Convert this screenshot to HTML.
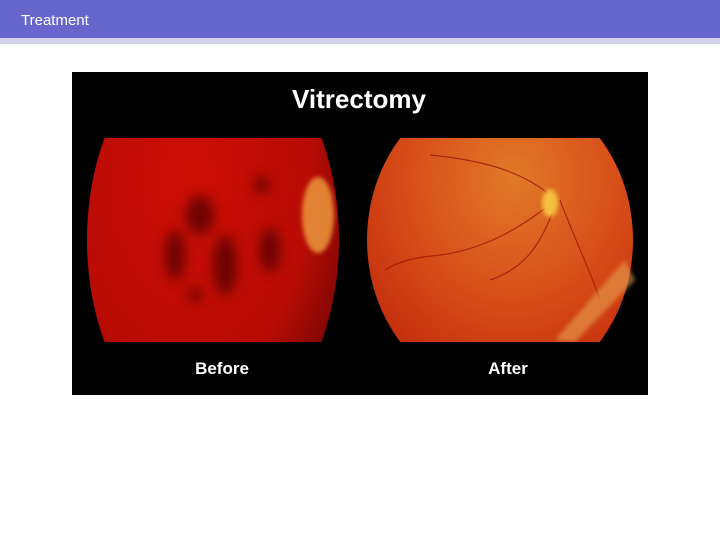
<!DOCTYPE html>
<html><head><meta charset="utf-8"><style>
html,body{margin:0;padding:0;background:#fff;width:720px;height:540px;overflow:hidden;font-family:"Liberation Sans",sans-serif}
.hdr{position:absolute;left:0;top:0;width:720px;height:38px;background:#6666cc}
.strip{position:absolute;left:0;top:38px;width:720px;height:6px;background:#d2d2ee}
.t{position:absolute;left:21px;top:12px;color:#fff;font-size:15px}
svg{position:absolute;left:72px;top:72px}
</style></head><body>
<div class="hdr"></div><div class="strip"></div><div class="t">Treatment</div>
<svg width="576" height="323" viewBox="72 72 576 323">
<defs>
<radialGradient id="b" cx="0.4" cy="0.35" r="0.7"><stop offset="0" stop-color="#cc0e06"/><stop offset="0.7" stop-color="#b80c05"/><stop offset="1" stop-color="#7a0603"/></radialGradient>
<radialGradient id="a" cx="0.55" cy="0.3" r="0.75"><stop offset="0" stop-color="#e07a28"/><stop offset="0.5" stop-color="#d8501a"/><stop offset="1" stop-color="#c0280a"/></radialGradient>
<clipPath id="cb"><rect x="80" y="138" width="270" height="204"/></clipPath>
<clipPath id="ca"><rect x="360" y="138" width="280" height="204"/></clipPath>
<filter id="f"><feGaussianBlur stdDeviation="6"/></filter>
<filter id="f2"><feGaussianBlur stdDeviation="2"/></filter>
</defs>
<rect x="72" y="72" width="576" height="323" fill="#000"/>
<text x="359" y="108" fill="#fff" font-size="26" font-weight="bold" text-anchor="middle" font-family="Liberation Sans, sans-serif">Vitrectomy</text>
<g clip-path="url(#cb)">
<ellipse cx="213" cy="240" rx="126" ry="200" fill="url(#b)"/>
<g filter="url(#f)" fill="#4a0202" opacity="0.7">
<ellipse cx="200" cy="215" rx="14" ry="20"/><ellipse cx="175" cy="255" rx="10" ry="25"/><ellipse cx="225" cy="265" rx="12" ry="30"/><ellipse cx="270" cy="250" rx="10" ry="22"/><ellipse cx="262" cy="185" rx="8" ry="8"/><ellipse cx="195" cy="295" rx="7" ry="7"/>
</g>
<g filter="url(#f2)" fill="#f0a040" opacity="0.8"><ellipse cx="318" cy="215" rx="16" ry="38"/></g>
</g>
<g clip-path="url(#ca)">
<ellipse cx="500" cy="240" rx="133" ry="154" fill="url(#a)"/>
<g fill="none" stroke="#a01808" stroke-width="1.2" opacity="0.8">
<path d="M555 200 C520 230 480 250 440 255 C420 257 400 260 385 270"/>
<path d="M555 205 C540 250 520 270 490 280"/>
<path d="M550 195 C520 170 480 160 430 155"/>
<path d="M560 200 C575 240 590 270 600 300"/>
</g>
<ellipse cx="550" cy="203" rx="8" ry="14" fill="#f4c040" filter="url(#f2)"/>
<path d="M555 340 L625 260 L635 280 L575 342 Z" fill="#e9a050" opacity="0.6" filter="url(#f2)"/>
</g>
<text x="222" y="374" fill="#fff" font-size="17" font-weight="bold" text-anchor="middle" font-family="Liberation Sans, sans-serif">Before</text>
<text x="508" y="374" fill="#fff" font-size="17" font-weight="bold" text-anchor="middle" font-family="Liberation Sans, sans-serif">After</text>
</svg>
</body></html>
